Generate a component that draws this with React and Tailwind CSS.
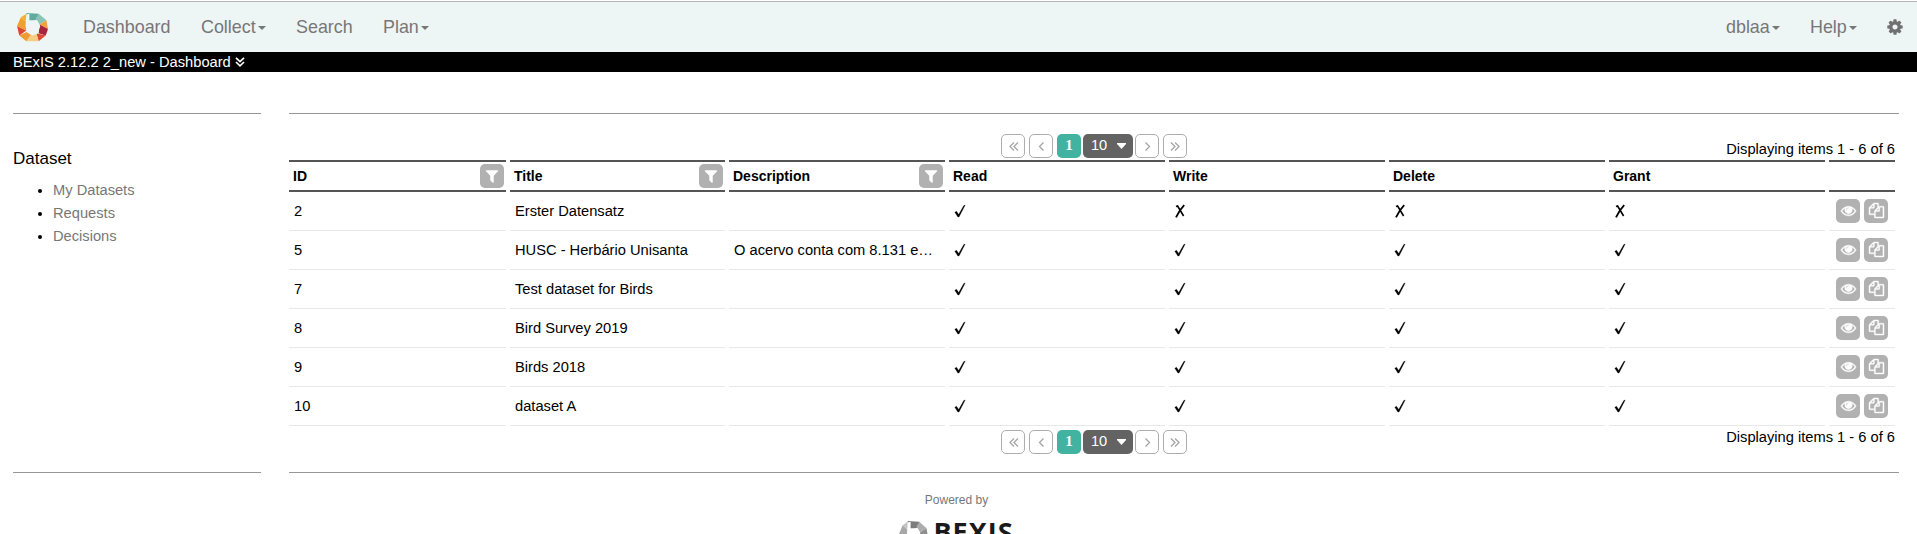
import React from "react";

const COLS = "grid grid-cols-[217px_215px_216px_216px_216px_216px_216px_66px] gap-x-[4px]";

const rows = [
  ["2", "Erster Datensatz", "", false],
  ["5", "HUSC - Herbário Unisanta", "O acervo conta com 8.131 e…", true],
  ["7", "Test dataset for Birds", "", true],
  ["8", "Bird Survey 2019", "", true],
  ["9", "Birds 2018", "", true],
  ["10", "dataset A", "", true],
];

const icons = {
  eye: "M1664 960q-152-236-381-353 61 104 61 225 0 185-131.5 316.5t-316.5 131.5-316.5-131.5-131.5-316.5q0-121 61-225-229 117-381 353 133 205 333.5 326.5t434.5 121.5 434.5-121.5 333.5-326.5zm-720-384q0-20-14-34t-34-14q-125 0-214.5 89.5t-89.5 214.5q0 20 14 34t34 14 34-14 14-34q0-86 61-147t147-61q20 0 34-14t14-34zm848 384q0 34-20 69-140 230-376.5 368.5t-499.5 138.5-499.5-139-376.5-368q-20-35-20-69t20-69q140-229 376.5-368t499.5-139 499.5 139 376.5 368q20 35 20 69z",
  cog: "M1152 896q0-106-75-181t-181-75-181 75-75 181 75 181 181 75 181-75 75-181zm512-109v222q0 12-8 23t-20 13l-185 28q-19 54-39 91 35 50 107 138 10 12 10 25t-9 23q-27 37-99 108t-94 71q-12 0-26-9l-138-108q-44 23-91 38-16 136-29 186-7 28-36 28h-222q-14 0-24.5-8.5t-11.5-21.5l-28-184q-49-16-90-37l-141 107q-10 9-25 9-14 0-25-11-126-114-165-168-7-10-7-23 0-12 8-23 15-21 51-66.5t54-70.5q-27-50-41-99l-183-27q-13-2-21-12.5t-8-23.5v-222q0-12 8-23t19-13l186-28q14-46 39-92-40-57-107-138-10-12-10-24 0-10 9-23 26-36 98.5-107.5t94.5-71.5q13 0 26 10l138 107q44-23 91-38 16-136 29-186 7-28 36-28h222q14 0 24.5 8.5t11.5 21.5l28 184q49 16 90 37l142-107q9-9 24-9 13 0 25 10 129 119 165 170 7 8 7 22 0 12-8 23-15 21-51 66.5t-54 70.5q26 50 41 98l183 28q13 2 21 12.5t8 23.5z",
  filter: "M1595 295q17 41-14 70l-493 493v742q0 42-39 59-13 5-25 5-27 0-45-19l-256-256q-19-19-19-45v-486l-493-493q-31-29-14-70 17-39 59-39h1280q42 0 59 39z",
  copy: "M1696 384q40 0 68 28t28 68v1216q0 40-28 68t-68 28h-960q-40 0-68-28t-28-68v-288h-544q-40 0-68-28t-28-68v-672q0-40 20-88t48-76l408-408q28-28 76-48t88-20h416q40 0 68 28t28 68v328q68-40 128-40h416zm-544 213l-299 299h299v-299zm-640-384l-299 299h299v-299zm196 647l316-316v-416h-384v416q0 40-28 68t-68 28h-416v640h512v-256q0-40 20-88t48-76zm956 804v-1152h-384v416q0 40-28 68t-68 28h-416v640h896z",
};

function Icon({ name, className }) {
  return <svg viewBox="0 0 1792 1792" className={`overflow-visible ${className}`} fill="currentColor"><path d={icons[name]} /></svg>;
}

const chevrons = {
  first: "M7 2.5 3 6.5l4 4M11 2.5 7 6.5l4 4",
  prev: "M8.5 2.5 4.5 6.5l4 4",
  next: "M4.5 2.5l4 4-4 4",
  last: "M2 2.5l4 4-4 4M6 2.5l4 4-4 4",
};

function Chevron({ dir }) {
  return <svg viewBox="0 0 13 13" className="size-[13px]" fill="none" stroke="#a5a5a5" strokeWidth="1.3"><path d={chevrons[dir]} /></svg>;
}

const ring = [
  ["12,0 28,1 27,9 13,13", 0],
  ["28,1 38,10 29,16 24,8", 1],
  ["38,10 40,22 29,16", 2],
  ["29,16 40,22 37,31 28,28", 3],
  ["37,31 28,39 25,28", 4],
  ["28,39 12,39 18,30 25,28", 5],
  ["12,39 3,31 13,26 18,30", 6],
  ["3,31 0,18 12,24", 7],
  ["0,18 5,6 13,13 12,24", 8],
  ["5,6 12,1 13,13", 9],
];
const warm = ["#62ab9c", "#8cc4b6", "#efa33a", "#a9233a", "#dd4933", "#f6ce83", "#ef9a35", "#e0452f", "#f0a02f", "#f3b13a"];
const grey = ["#7d7d7d", "#adadad", "#8f8f8f", "#555", "#777", "#ccc", "#aaa", "#777", "#a8a8a8", "#c4c4c4"];

function Ring({ colors, bg, className }) {
  return (
    <svg viewBox="0 0 40 40" className={className} preserveAspectRatio="none">
      {ring.map(([p, c]) => <polygon key={c} points={p} fill={colors[c]} />)}
      <polygon points="12,2 16,1 16,10 26,10 30,18 27,28 20,31 13,27 11,18" fill={bg} />
    </svg>
  );
}

function Caret() {
  return <span className="ml-[2px] inline-block border-x-[4px] border-t-[4px] border-x-transparent border-t-[#777] align-middle" />;
}

function Check() {
  return (
    <svg viewBox="0 0 12 14" className="h-[14px] w-[12px]">
      <path d="M.8 8.2 2.5 7.3 4.7 10.6 9.8 1.6 11.2 1 5 13H3.9Z" fill="#000" stroke="#000" strokeWidth=".3" />
    </svg>
  );
}

function Cross() {
  return (
    <svg viewBox="0 0 12 14" className="h-[14px] w-[12px]" fill="none" stroke="#000">
      <path d="M2 2.6 3.6 2 9.6 12" strokeWidth="1.6" />
      <path d="M10.2 1.2Q5.5 6 2 13.4" strokeWidth="1.8" />
    </svg>
  );
}

function PageButton({ dir }) {
  return <span className="flex h-6 w-6 items-center justify-center rounded-[5px] border border-[#adadad]"><Chevron dir={dir} /></span>;
}

function Pager() {
  return (
    <div className="flex h-6">
      <div className="flex gap-1">
        <PageButton dir="first" />
        <PageButton dir="prev" />
        <span className="h-6 w-6 rounded-[5px] bg-[#41b3a0] text-center font-['Liberation_Serif',serif] text-[15px] font-bold leading-[22px] text-white">1</span>
      </div>
      <div className="mx-[2px] flex h-6 w-[50px] items-center justify-between rounded-[5px] bg-[#636363] pl-[8px] pr-[7px] text-[14.6px] text-white">
        <span className="-mt-px">10</span>
        <svg viewBox="0 0 9 6" className="h-[6px] w-[9px]"><path d="M0 0h9v1L4.5 6 0 1Z" fill="#fff" /></svg>
      </div>
      <div className="flex gap-1">
        <PageButton dir="next" />
        <PageButton dir="last" />
      </div>
    </div>
  );
}

function HeadCell({ label, filter }) {
  return (
    <div className="flex h-[32px] items-center justify-between border-y-2 border-[#555] pl-[4px] pr-[2px] text-[14px] font-bold">
      <span>{label}</span>
      {filter && <span className="flex size-6 items-center justify-center rounded-[5px] bg-[#b1b1b1]"><Icon name="filter" className="-mt-px size-[16px] text-white" /></span>}
    </div>
  );
}

function Cell({ children, className = "" }) {
  return <div className={`flex h-[39px] items-center overflow-hidden whitespace-nowrap border-b border-[#e8e8e8] pl-[5px] ${className}`}>{children}</div>;
}

function TextCell({ children }) {
  return <Cell className="pt-px">{children}</Cell>;
}

function Action({ name }) {
  return <span className="flex size-6 items-center justify-center rounded-[5px] bg-[#b1b1b1] text-white"><Icon name={name} className="-mt-[2px] size-[15px] stroke-white stroke-[50]" /></span>;
}

export default function App() {
  return (
    <div className="h-[534px] w-[1917px] overflow-hidden bg-white font-['Liberation_Sans',Arial,sans-serif] text-[14.68px] text-black">
      <div className="h-px bg-white" />
      <nav className="flex h-[51px] items-center border-t border-[#b3b6b6] bg-[#eef5f5] pl-[17px] pr-[13px] pt-px text-[17.9px] text-[#777]">
        <Ring colors={warm} bg="#eef5f5" className="-mt-px h-[29px] w-[31px]" />
        <span className="ml-[35px] w-[118px]">Dashboard</span>
        <span className="w-[95px]">Collect<Caret /></span>
        <span className="w-[87px]">Search</span>
        <span>Plan<Caret /></span>
        <span className="ml-auto w-[84px]">dblaa<Caret /></span>
        <span className="w-[76px]">Help<Caret /></span>
        <Icon name="cog" className="-mt-px size-[18px] text-[#707070]" />
      </nav>
      <div className="flex h-5 items-center gap-[4px] bg-black pl-[13px] text-white">
        <span className="pt-px">BExIS 2.12.2 2_new - Dashboard</span>
        <svg viewBox="0 0 10 10" className="-mt-px size-[10px]" fill="none" stroke="#fff" strokeWidth="1.6"><path d="M1 .8 5 4.6 9 .8M1 5 5 8.8 9 5" /></svg>
      </div>
      <main className="mt-[41px] flex pl-[13px]">
        <aside className="h-[360px] w-[248px] border-y border-[#969696]">
          <h2 className="mt-[35px] text-[17px] leading-[20px]">Dataset</h2>
          <ul className="ml-[40px] mt-[10px] list-disc leading-[23px] text-black">
            <li><span className="text-[#777]">My Datasets</span></li>
            <li><span className="text-[#777]">Requests</span></li>
            <li><span className="text-[#777]">Decisions</span></li>
          </ul>
        </aside>
        <section className="ml-[28px] h-[360px] w-[1610px] border-y border-[#969696]">
          <div className="mt-[20px] flex h-[26px] w-[1606px] justify-between pl-[712px]">
            <Pager /><span className="mt-[6px] leading-[18px]">Displaying items 1 - 6 of 6</span>
          </div>
          <div className={COLS}>
            <HeadCell label="ID" filter /><HeadCell label="Title" filter /><HeadCell label="Description" filter />
            <HeadCell label="Read" /><HeadCell label="Write" /><HeadCell label="Delete" /><HeadCell label="Grant" /><HeadCell />
          </div>
          {rows.map(([id, title, desc, all]) => (
            <div key={id} className={COLS}>
              <TextCell>{id}</TextCell><TextCell>{title}</TextCell><TextCell>{desc}</TextCell><Cell><Check /></Cell>
              {[0, 1, 2].map((i) => <Cell key={i}>{all ? <Check /> : <Cross />}</Cell>)}
              <Cell className="gap-1">
                <span className="ml-[2px]"><Action name="eye" /></span>
                <Action name="copy" />
              </Cell>
            </div>
          ))}
          <div className="mt-[4px] flex w-[1606px] justify-between pl-[712px]"><Pager /><span className="-mt-[2px] leading-[18px]">Displaying items 1 - 6 of 6</span></div>
        </section>
      </main>
      <footer className="flex flex-col items-center pr-[4px] pt-[18px]">
        <span className="text-[12px] leading-[18px] text-[#777]">Powered by</span>
        <div className="mt-[12px] flex gap-[5px]">
          <Ring colors={grey} bg="#fff" className="size-[29px]" />
          <span className="-mt-[3px] font-['Open_Sans',sans-serif] text-[27px] font-bold leading-[27px] tracking-[1px] text-[#1a1a1a]">BEXIS</span>
        </div>
      </footer>
    </div>
  );
}
